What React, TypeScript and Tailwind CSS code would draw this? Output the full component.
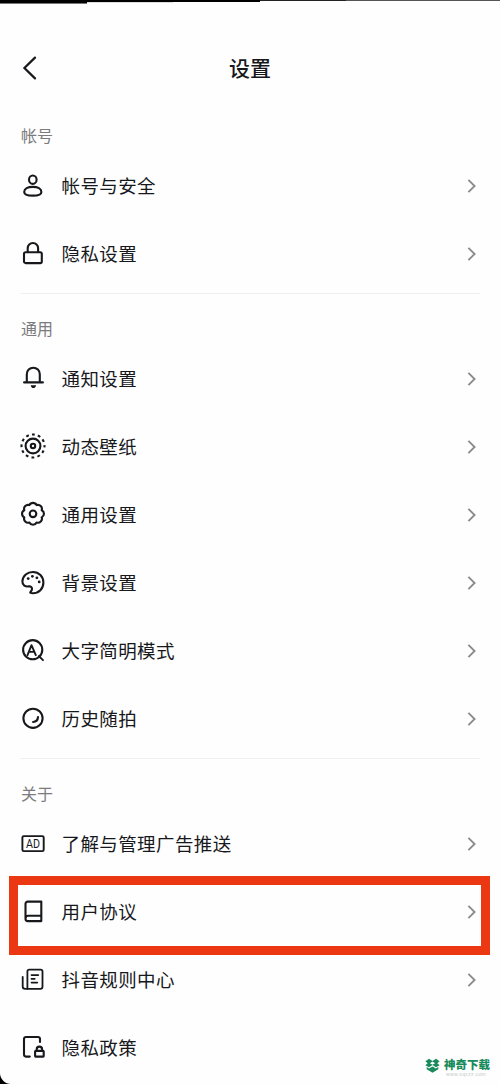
import type { ReactNode } from 'react';

interface SettingItem {
  label: string;
  icon: ReactNode;
  highlighted?: boolean;
}

interface SettingSection {
  title: string;
  items: SettingItem[];
}

function Icon({ children }: { children: ReactNode }) {
  return (
    <svg
      className="size-7 shrink-0 overflow-visible"
      viewBox="0 0 28 28"
      fill="none"
      stroke="currentColor"
      strokeWidth={2.1}
      strokeLinecap="round"
      strokeLinejoin="round"
    >
      {children}
    </svg>
  );
}

const UserIcon = () => (
  <Icon>
    <ellipse cx="13.8" cy="7.7" rx="3.8" ry="4.2" />
    <path d="M13.8 14.9c4.9 0 8.6 1.9 8.6 5 0 2.4-2 3.7-8.6 3.7s-8.6-1.3-8.6-3.7c0-3.1 3.7-5 8.6-5Z" />
  </Icon>
);

const LockIcon = () => (
  <Icon>
    <rect x="5" y="12.2" width="17.8" height="10.9" rx="1.6" />
    <path d="M8.7 12V8.2a5.2 5.2 0 0 1 10.4 0V12" />
  </Icon>
);

const BellIcon = () => (
  <Icon>
    <path d="M7.8 17V9.2a6.5 6.5 0 0 1 13 0V17M5.1 17.4h18.8" />
    <path
      d="M11.7 20.3h5.4c-.3 1.9-1.3 2.8-2.7 2.8s-2.4-.9-2.7-2.8Z"
      fill="currentColor"
      stroke="none"
    />
  </Icon>
);

const LiveIcon = () => (
  <Icon>
    <circle
      cx="14"
      cy="13"
      r="11.5"
      strokeDasharray="2.8 3.221"
      strokeDashoffset="1.4"
      strokeLinecap="butt"
    />
    <circle cx="14" cy="13" r="7.4" />
    <circle cx="14" cy="13" r="2.2" />
  </Icon>
);

const GearIcon = () => (
  <Icon>
    <path d="M10.4 4.1a4 4 0 0 1 7.2 0a4 4 0 0 1 5.1 5.1a4 4 0 0 1 0 7.2a4 4 0 0 1-5.1 5.1a4 4 0 0 1-7.2 0a4 4 0 0 1-5.1-5.1a4 4 0 0 1 0-7.2a4 4 0 0 1 5.1-5.1Z" />
    <circle cx="14" cy="12.8" r="3.3" />
  </Icon>
);

const PaletteIcon = () => (
  <Icon>
    <path d="M3.4 12.2C3.8 6.7 8.4 3 13.9 3c6.1 0 10.5 4.6 10.5 10.5 0 6.3-4.4 10.7-10.8 10.7-1.9 0-2.6-.5-2.3-1 .4-.8 1.5-1.3 1.7-3 .2-1.8-1.2-3.1-3.2-2.8-3.2.5-6.6-1-6.4-5.2Z" />
    <g fill="currentColor" stroke="none">
      <circle cx="9.2" cy="9.6" r="1.4" />
      <circle cx="13.4" cy="7.3" r="1.4" />
      <circle cx="17.9" cy="8.8" r="1.4" />
      <circle cx="20.2" cy="12.9" r="1.4" />
    </g>
  </Icon>
);

const LargeTextIcon = () => (
  <Icon>
    <circle cx="13.7" cy="12.7" r="9.6" />
    <path
      d="m8.5 18.1 4-9.9 4.3 9.9M10 14.9h5.5M19.9 19.1l4.1 4.1"
      strokeWidth={1.9}
    />
  </Icon>
);

const MomentIcon = () => (
  <Icon>
    <circle cx="14" cy="13.3" r="9.6" />
    <path d="M19 12.1c-.2 2.8-2 4.7-4.9 4.9" />
  </Icon>
);

const AdIcon = () => (
  <Icon>
    <rect x="3.4" y="6.1" width="21.3" height="15" rx="1.4" strokeWidth={1.9} />
    <text
      x="7.1"
      y="17.8"
      textLength="14"
      lengthAdjust="spacingAndGlyphs"
      className="font-['Roboto',sans-serif] text-[12px]"
      fill="currentColor"
      stroke="none"
    >
      AD
    </text>
  </Icon>
);

const BookIcon = () => (
  <Icon>
    <path d="M8.8 3.6h13.5v19.5H8.8A2.3 2.3 0 0 1 6.5 20.8V5.9a2.3 2.3 0 0 1 2.3-2.3ZM6.7 20.1c0-1.6.9-2.4 2.4-2.4h13" />
  </Icon>
);

const RulesIcon = () => (
  <Icon>
    <g strokeWidth={1.8}>
      <path d="M8.4 23V5.4c0-1.1.7-1.8 1.8-1.8h11.5c1.1 0 1.8.7 1.8 1.8v15.4c0 1.3-.8 2-2 2H6.2c-1.6 0-2.5-.8-2.5-2.3V11" />
      <path d="M12.4 9.1h7M12.4 12.9h3.4M12.4 16.6h6" strokeWidth={1.6} />
    </g>
  </Icon>
);

const PolicyIcon = () => (
  <Icon>
    <path d="M21 7.9V5c0-1.3-.7-2-2-2H7c-1.3 0-2 .7-2 2v15.6c0 1.2.7 2 2 2h3.8" />
    <rect x="16.1" y="16.9" width="8.6" height="5.7" rx=".6" />
    <path d="M17.7 16.6v-1.3a2.7 2.7 0 0 1 5.4 0v1.3" />
  </Icon>
);

const sections: SettingSection[] = [
  {
    title: '帐号',
    items: [
      { label: '帐号与安全', icon: <UserIcon /> },
      { label: '隐私设置', icon: <LockIcon /> },
    ],
  },
  {
    title: '通用',
    items: [
      { label: '通知设置', icon: <BellIcon /> },
      { label: '动态壁纸', icon: <LiveIcon /> },
      { label: '通用设置', icon: <GearIcon /> },
      { label: '背景设置', icon: <PaletteIcon /> },
      { label: '大字简明模式', icon: <LargeTextIcon /> },
      { label: '历史随拍', icon: <MomentIcon /> },
    ],
  },
  {
    title: '关于',
    items: [
      { label: '了解与管理广告推送', icon: <AdIcon /> },
      { label: '用户协议', icon: <BookIcon />, highlighted: true },
      { label: '抖音规则中心', icon: <RulesIcon /> },
      { label: '隐私政策', icon: <PolicyIcon /> },
    ],
  },
];

function Chevron() {
  return (
    <svg
      className="ml-auto h-4 w-2.5 shrink-0"
      viewBox="0 0 10 16"
      fill="none"
      stroke="#8c8c8f"
      strokeWidth={1.9}
    >
      <path d="m1.4 1.8 6.2 6.2-6.2 6.2" />
    </svg>
  );
}

function SettingRow({ item, last }: { item: SettingItem; last: boolean }) {
  return (
    <li className="relative flex h-[68px] items-center pr-[23px] pl-[19px]">
      {item.icon}
      <span className="ml-[14.5px] text-[18.5px] tracking-[0.4px]">
        {item.label}
      </span>
      {!last && <Chevron />}
      {item.highlighted && (
        <div className="absolute -top-0.5 left-[9px] h-[79px] w-[481px] border-9 border-[#ec3713]" />
      )}
    </li>
  );
}

function Watermark() {
  return (
    <div className="absolute right-2.5 bottom-[7px] flex items-start gap-1 text-[#198a5c]">
      <svg className="h-[15px] w-[15px]" viewBox="0 0 15 15" fill="currentColor">
        <path d="M4 .8 7.5 3 11 .8l3.6 2.4-2.3 2 2.3 2L11 9.3 7.5 7 4 9.3.4 7.2l2.3-2-2.3-2L4 .8Zm3.5 2.7L4.9 5.2l2.6 1.6 2.6-1.6-2.6-1.7Z" />
        <path d="m1.7 9 2.4 1.6 3.4-2.2 3.4 2.2L13.3 9v2.2l-5.8 3.5-5.8-3.5V9Z" />
      </svg>
      <div className="flex flex-col">
        <span className="text-[11.5px] leading-[13px] font-black">神奇下载</span>
        <span className="pl-0.5 font-['Liberation_Sans',sans-serif] text-[5px] leading-[6px] tracking-[0.35px] text-[#c4cbc8]">
          www.sqxzz.com
        </span>
      </div>
    </div>
  );
}

export default function App() {
  return (
    <div className="h-[1084px] w-[500px] bg-black">
      <div className="relative flex h-full flex-col overflow-hidden rounded-bl-[11px] bg-[#fefefe] font-['Noto_Sans_CJK_SC',sans-serif] text-[#17181c]">
        {/* status bar edge, thinning out to the right */}
        <div className="flex h-[5px] shrink-0 items-start">
          <div className="h-1 w-[87px] border-b border-[#777] bg-black" />
          <div className="h-[3px] w-[86px] border-b border-[#ddd] bg-black" />
          <div className="h-0.5 w-[87px] bg-black" />
          <div className="h-px w-[86px] bg-[#222]" />
          <div className="h-px flex-1 bg-[#555]" />
        </div>

        <header className="relative flex h-[118px] shrink-0 justify-center pt-[46px]">
          <svg
            className="absolute top-[50px] left-[21px] h-[26px] w-[18px]"
            viewBox="0 0 18 26"
            fill="none"
            stroke="currentColor"
            strokeWidth={2.2}
            strokeLinecap="round"
          >
            <path d="M14 2.6 3.4 13 14 23.4" />
          </svg>
          <h1 className="text-[21px] leading-8 font-medium">设置</h1>
        </header>

        <main>
          {sections.map((section, i) => (
            <section key={section.title} className={i > 0 ? 'mt-[5px]' : ''}>
              {i > 0 && <hr className="mx-5 mb-[22px] border-[#f0f0f1]" />}
              <h2 className="mb-[5px] px-[21px] text-[16px] leading-6 text-[#7c7c80]">
                {section.title}
              </h2>
              <ul>
                {section.items.map((item) => (
                  <SettingRow
                    key={item.label}
                    item={item}
                    last={item.label === '隐私政策'}
                  />
                ))}
              </ul>
            </section>
          ))}
        </main>

        <Watermark />
      </div>
    </div>
  );
}
